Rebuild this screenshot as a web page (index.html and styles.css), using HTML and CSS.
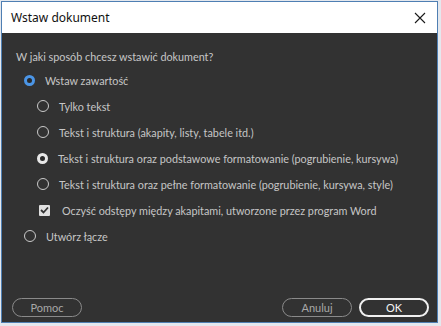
FILE: index.html
```html
<!doctype html>
<html>
  <head>
    <meta charset="utf-8">
    <link rel="stylesheet" href="styles.css">
    <title>Wstaw dokument</title>
  </head>
  <body>
    <div id="window">
      <div id="title-bar">
        <span class="title">Wstaw dokument</span>
        <svg class="close" width="12" height="12" viewBox="0 0 12 12">
          <path d="M1 1 L11 11 M11 1 L1 11" stroke="#1a1a1a" stroke-width="1.1" fill="none"/>
        </svg>
      </div>
      <div id="content">
        <div class="question">W jaki sposób chcesz wstawić dokument?</div>
        <div class="options">
          <div class="row"><span class="radio checked-blue"></span><span class="label">Wstaw zawartość</span></div>
          <div class="sub-options">
            <div class="row"><span class="radio"></span><span class="label">Tylko tekst</span></div>
            <div class="row"><span class="radio"></span><span class="label">Tekst i struktura (akapity, listy, tabele itd.)</span></div>
            <div class="row"><span class="radio checked-white"></span><span class="label">Tekst i struktura oraz podstawowe formatowanie (pogrubienie, kursywa)</span></div>
            <div class="row"><span class="radio"></span><span class="label">Tekst i struktura oraz pełne formatowanie (pogrubienie, kursywa, style)</span></div>
            <div class="row check-row">
              <span class="checkbox">
                <svg width="9" height="8" viewBox="0 0 9 8"><path d="M1 4 L3.5 6.5 L8 1.5" stroke="#333" stroke-width="1.8" fill="none"/></svg>
              </span>
              <span class="label">Oczyść odstępy między akapitami, utworzone przez program Word</span>
            </div>
          </div>
          <div class="row"><span class="radio"></span><span class="label">Utwórz łącze</span></div>
        </div>
        <div class="buttons">
          <button class="btn">Pomoc</button>
          <div class="spacer"></div>
          <button class="btn">Anuluj</button>
          <button class="btn primary">OK</button>
        </div>
      </div>
    </div>
  </body>
</html>
```

FILE: styles.css
```css
body {
  margin: 0;
  background: #e4e8ee;
  font-family: "Lato", "Liberation Sans", sans-serif;
}

#window {
  width: 435px;
  height: 320px;
  margin: 1px 0 0 1px;
  border: 1px solid #4f7fb3;
  display: flex;
  flex-direction: column;
}

#title-bar {
  height: 31px;
  background: #fff;
  display: flex;
  align-items: center;
  justify-content: space-between;
  padding: 0 11px 0 9px;
}

.title {
  font-family: "Noto Sans", sans-serif;
  font-size: 12px;
  color: #111;
}

#content {
  flex: 1;
  background: #323232;
  padding: 16px 14px 0 14px;
  display: flex;
  flex-direction: column;
  color: #c6c6c6;
  font-size: 10.8px;
}

.question {
  height: 16px;
  line-height: 16px;
}

.options {
  margin-top: 2px;
  padding-left: 8px;
}

.row {
  display: flex;
  align-items: center;
  height: 26px;
}

.sub-options {
  padding-left: 13px;
}

.radio {
  width: 10px;
  height: 10px;
  border: 1px solid #cacaca;
  border-radius: 50%;
  margin-right: 10px;
  flex-shrink: 0;
  box-sizing: content-box;
}

.radio.checked-blue {
  width: 5px;
  height: 5px;
  border: 3.5px solid #4b95e6;
  background: #2a2a2a;
}

.radio.checked-white {
  width: 5px;
  height: 5px;
  border: 3.5px solid #e8e8e8;
  background: #2a2a2a;
}

.label {
  white-space: nowrap;
}

.check-row {
  padding-left: 2px;
  height: 20px;
  margin: 3px 0;
}

.checkbox {
  width: 11px;
  height: 11px;
  background: #e0e0e0;
  border-radius: 1px;
  margin-right: 12px;
  display: flex;
  align-items: center;
  justify-content: center;
}

.buttons {
  display: flex;
  align-items: center;
  margin-top: auto;
  margin-bottom: 5px;
  margin-left: -4px;
  margin-right: -6px;
}

.spacer {
  flex: 1;
}

.btn {
  width: 70px;
  height: 19px;
  border: 1px solid #8a8a8a;
  border-radius: 10px;
  background: transparent;
  color: #a8a8a8;
  font-family: "Lato", "Liberation Sans", sans-serif;
  font-size: 11px;
  padding: 0;
  margin-left: 7px;
}

.btn:first-child {
  margin-left: 0;
}

.btn.primary {
  border: 2px solid #f0f0f0;
  color: #f4f4f4;
}
```
